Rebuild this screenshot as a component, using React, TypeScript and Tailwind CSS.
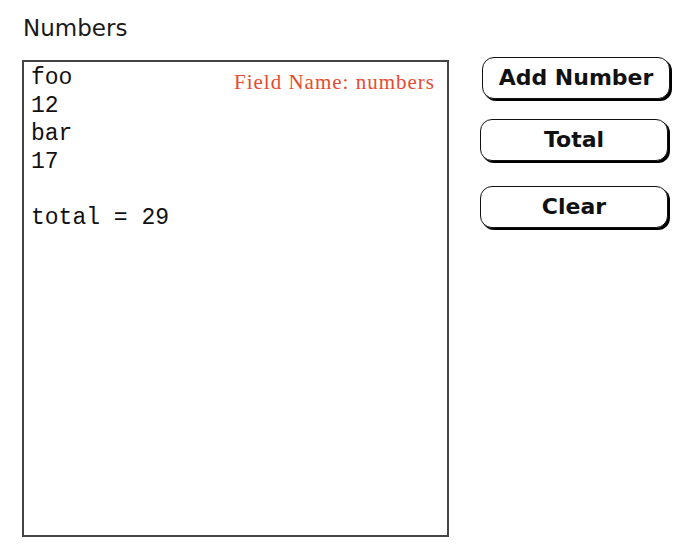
import React from "react";

const btn =
  "flex items-center justify-center w-[188px] h-[42px] rounded-[12px] border border-[#111] bg-white shadow-[2px_2px_0_#000] text-[22px] font-bold text-[#111] leading-none";

export default function App() {
  const lines = ["foo", "12", "bar", "17", "", "total = 29"];
  return (
    <div className="w-[692px] h-[557px] bg-white flex pl-[22px] pt-[15px]" style={{ fontFamily: '"DejaVu Sans", sans-serif' }}>
      <div className="flex flex-col">
        <div className="text-[23px] leading-[22px] text-[#1a1a1a] ml-[1px] mt-[2px] mb-[21px]">Numbers</div>
        <div className="relative w-[427px] h-[477px] border-2 border-[#444] bg-white pl-[7px] pt-[2px]">
          <div
            className="text-[23px] leading-[28px] text-[#111] whitespace-pre"
            style={{ fontFamily: '"Liberation Mono", monospace' }}
          >
            {lines.map((l, i) => (
              <div key={i} className="h-[28px]">{l}</div>
            ))}
          </div>
          <div
            className="absolute right-[12px] top-[8px] text-[21px] leading-[24px] text-[#e84a2f] tracking-[1px]"
            style={{ fontFamily: '"Liberation Serif", serif' }}
          >
            Field Name: numbers
          </div>
        </div>
      </div>
      <div className="flex flex-col ml-[31px] mt-[42px]">
        <button className={btn + " ml-[2px]"}>Add Number</button>
        <button className={btn + " mt-[20px]"}>Total</button>
        <button className={btn + " mt-[25px]"}>Clear</button>
      </div>
    </div>
  );
}
